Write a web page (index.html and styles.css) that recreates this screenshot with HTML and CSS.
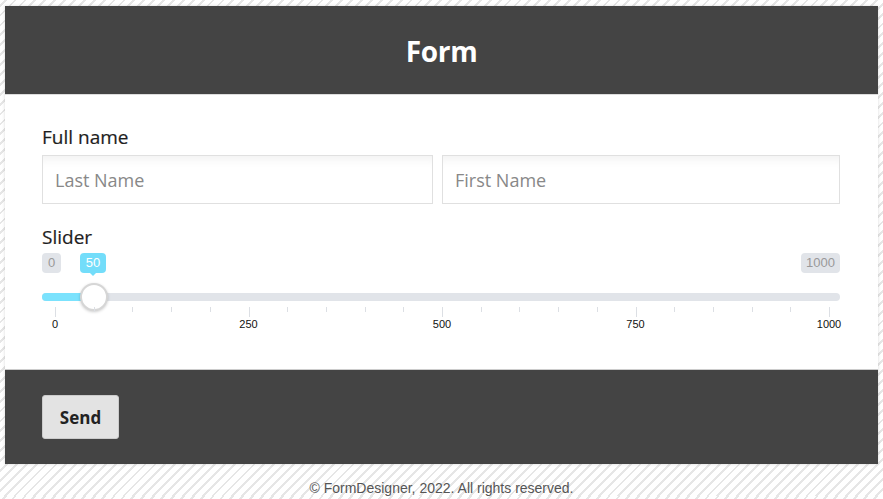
FILE: index.html
```html
<!DOCTYPE html>
<html>
<head>
<meta charset="utf-8">
<link rel="stylesheet" href="styles.css">
</head>
<body>
<div class="page">
  <form class="card">
    <header class="card-head"><h1>Form</h1></header>
    <div class="card-body">
      <div class="field">
        <label class="label">Full name</label>
        <div class="row">
          <input class="input" type="text" placeholder="Last Name">
          <input class="input" type="text" placeholder="First Name">
        </div>
      </div>
      <div class="field slider-field">
        <label class="label">Slider</label>
        <div class="slider">
          <div class="badges">
            <span class="badge min">0</span>
            <span class="badge max">1000</span>
            <span class="badge cur" style="left:38px">50</span>
          </div>
          <div class="track-wrap">
            <div class="track"><div class="fill" style="width:52px"></div></div>
            <div class="handle" style="left:38px"></div>
          </div>
          <div class="grid" id="grid"></div>
        </div>
      </div>
    </div>
    <footer class="card-foot"><button type="button" class="btn">Send</button></footer>
  </form>
  <p class="copy">© FormDesigner, 2022. All rights reserved.</p>
</div>
<script>
  var g = document.getElementById('grid');
  for (var i = 0; i <= 20; i++) {
    var t = document.createElement('span');
    var major = i % 5 === 0;
    t.className = 'tick' + (major ? ' major' : '');
    t.style.left = (i * 5) + '%';
    g.appendChild(t);
    if (major) {
      var l = document.createElement('span');
      l.className = 'tick-label';
      l.style.left = (i * 5) + '%';
      l.textContent = String(i * 50);
      g.appendChild(l);
    }
  }
</script>
</body>
</html>
```
FILE: styles.css
```css
* { box-sizing: border-box; }
html, body { margin: 0; padding: 0; }
body {
  background: repeating-linear-gradient(135deg, #ffffff 0 3px, #e6e6e6 3px 5px, #ffffff 5px 7px);
  background-color: #fff;
  font-family: "Open Sans", sans-serif;
}
.page { padding: 6px 5px 0; }
.card {
  display: block;
  margin: 0;
  background: #fff;
  box-shadow: 0 0 3px rgba(0,0,0,0.15);
}
.card-head {
  background: #444;
  height: 89px;
  display: flex;
  align-items: center;
  justify-content: center;
  border-bottom: 1px solid #ddd;
}
.card-head h1 {
  margin: 0;
  color: #fff;
  font-size: 28px;
  font-weight: 700;
  line-height: 1;
  letter-spacing: -0.3px;
  transform: translateY(1px);
}
.card-body { padding: 27px 38px 20px 37px; height: 274px; }
.field { display: flex; flex-direction: column; }
.label {
  font-size: 19px;
  color: #1e1e1e;
  line-height: 30px;
  height: 30px;
  -webkit-text-stroke: 0.2px #1e1e1e;
}
.row { display: flex; gap: 9px; margin-top: 3px; }
.input {
  flex: 1 1 0;
  min-width: 0;
  height: 49px;
  border: 1px solid #e0e0e0;
  background: #fff;
  box-shadow: inset 0 12px 12px -10px rgba(0,0,0,0.07);
  padding: 0 12px;
  font-family: "Open Sans", sans-serif;
  font-size: 18px;
  color: #333;
  outline: none;
}
.input:first-child { flex: 0 0 391px; }
.input::placeholder { color: #888; }
.slider-field { margin-top: 18px; }
.slider { position: relative; height: 100px; }
.badges { position: relative; height: 20px; margin-top: 1px; }
.badge {
  position: absolute;
  top: 0;
  height: 20px;
  line-height: 20px;
  padding: 0 5px;
  border-radius: 4px;
  font-family: "Liberation Sans", Arial, sans-serif;
  font-size: 13px;
  background: #e1e4e9;
  color: #999;
}
.badge.min { left: 0; padding: 0 6px; }
.badge.max { right: 0; }
.badge.cur {
  background: #73ddfa;
  color: #fff;
  width: 26px;
  padding: 0;
  text-align: center;
}
.badge.cur::after {
  content: "";
  position: absolute;
  left: 50%;
  bottom: -3px;
  margin-left: -3px;
  border: 3px solid transparent;
  border-top-color: #73ddfa;
  border-bottom: 0;
}
.track-wrap { position: relative; height: 30px; margin-top: 11px; }
.track {
  position: absolute;
  left: 0; right: 0; top: 9px;
  height: 8px;
  border-radius: 4px;
  background: #e1e4e9;
  overflow: hidden;
}
.fill { height: 100%; background: #7be2fd; }
.handle {
  position: absolute;
  top: -1px;
  width: 28px;
  height: 28px;
  border-radius: 50%;
  background: #fff;
  border: 2px solid #d6d6d6;
  box-shadow: 0 1px 3px rgba(0,0,0,0.2);
}
.grid { position: relative; margin: -7px 11px 0 13px; height: 30px; }
.tick {
  position: absolute;
  top: 0;
  width: 1px;
  height: 5px;
  background: #dcdfe4;
}
.tick.major { height: 10px; }
.tick-label {
  position: absolute;
  top: 12px;
  transform: translateX(-50%);
  font-family: "Liberation Sans", Arial, sans-serif;
  font-size: 11px;
  color: #111;
  line-height: 11px;
}
.card-foot {
  background: #444;
  border-top: 1px solid #ccc;
  height: 95px;
  padding: 25px 37px;
}
.btn {
  width: 77px;
  height: 44px;
  border: 1px solid #ccc;
  border-radius: 3px;
  background: #e3e3e3;
  font-family: "Open Sans", sans-serif;
  font-size: 17px;
  font-weight: 700;
  color: #222;
}
.copy {
  margin: 0;
  text-align: center;
  font-family: "Liberation Sans", Arial, sans-serif;
  font-size: 14px;
  color: #555;
  line-height: 16px;
  padding-top: 16px;
}
```
